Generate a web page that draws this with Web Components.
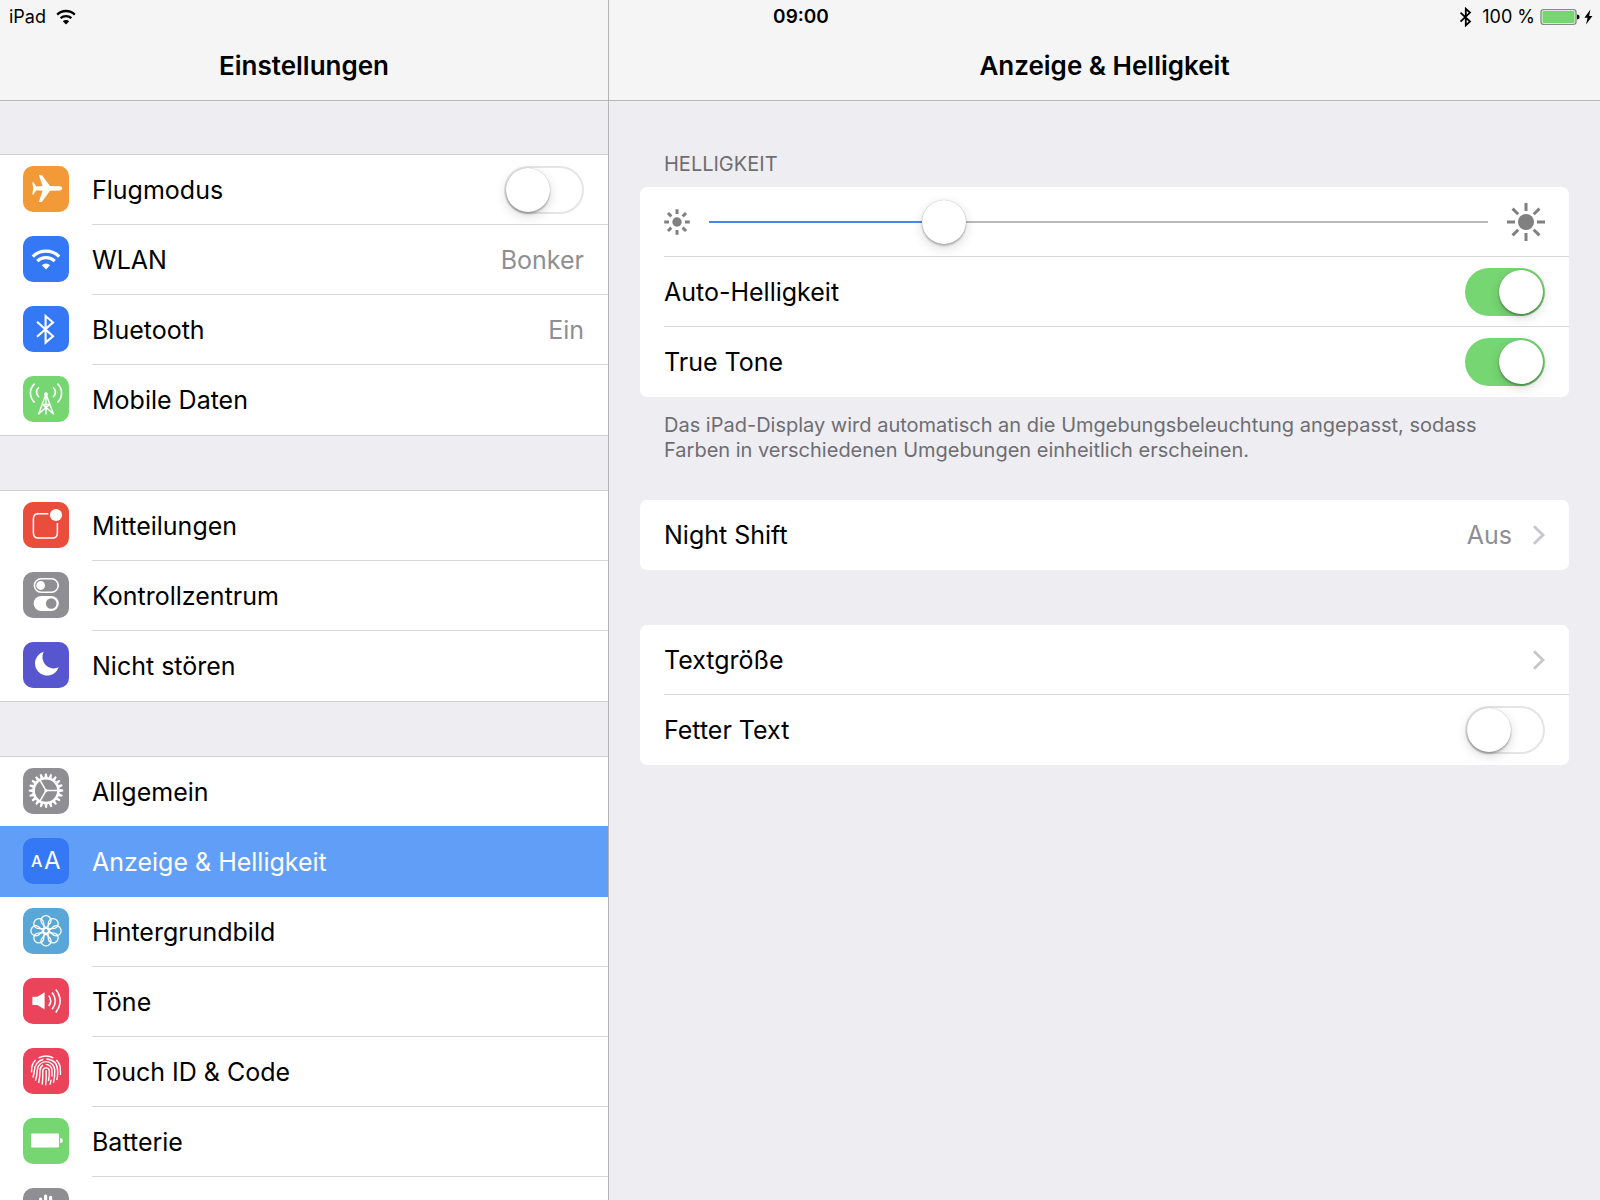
<!DOCTYPE html>
<html lang="de">
<head>
<meta charset="utf-8">
<meta name="viewport" content="width=device-width, initial-scale=1">
<title>Einstellungen</title>
<style>
  :root {
    --bg: #eeedf2;
    --bar: #f5f5f6;
    --line: #d8d8dc;
    --blue: #3478f6;
    --green: #76d672;
    --gray: #8e8e93;
    --row: 70px;
    --inset: 24px;
    --gap: 54px;
  }

  body {
    margin: 0;
    background: var(--bg);
    color: #000;
    font: 25px/34px Inter, "Liberation Sans", sans-serif;
  }
</style>
</head>
<body>
<split-view>
  <status-bar slot="status"></status-bar>

  <nav-pane slot="master" heading="Einstellungen">
    <settings-list>
      <switch-row icon="plane">Flugmodus</switch-row>
      <link-row icon="wifi" value="Bonker">WLAN</link-row>
      <link-row icon="bluetooth" value="Ein">Bluetooth</link-row>
      <link-row icon="cellular">Mobile Daten</link-row>
    </settings-list>
    <settings-list>
      <link-row icon="notifications">Mitteilungen</link-row>
      <link-row icon="control">Kontrollzentrum</link-row>
      <link-row icon="moon">Nicht stören</link-row>
    </settings-list>
    <settings-list>
      <link-row icon="gear">Allgemein</link-row>
      <link-row icon="display" selected>Anzeige &amp; Helligkeit</link-row>
      <link-row icon="wallpaper">Hintergrundbild</link-row>
      <link-row icon="sound">Töne</link-row>
      <link-row icon="touchid">Touch ID &amp; Code</link-row>
      <link-row icon="battery">Batterie</link-row>
      <link-row icon="privacy" name="Datenschutz"></link-row>
    </settings-list>
  </nav-pane>

  <nav-pane slot="detail" heading="Anzeige &amp; Helligkeit">
    <settings-card heading="Helligkeit">
      <brightness-row value="29"></brightness-row>
      <switch-row checked>Auto-Helligkeit</switch-row>
      <switch-row checked>True Tone</switch-row>
      <span slot="note">Das iPad-Display wird automatisch an die Umgebungsbeleuchtung angepasst, sodass Farben in verschiedenen Umgebungen einheitlich erscheinen.</span>
    </settings-card>
    <settings-card>
      <link-row value="Aus" chevron>Night Shift</link-row>
    </settings-card>
    <settings-card>
      <link-row chevron>Textgröße</link-row>
      <switch-row>Fetter Text</switch-row>
    </settings-card>
  </nav-pane>
</split-view>

<script>
// Tile icons, all drawn in a 46 x 46 box
const around = (n, shape) => Array.from({ length: n }, (_, i) =>
  `<g transform="rotate(${i * 360 / n})">${shape}</g>`).join('');

const ICONS = {
  plane: ['#f19a37', `
    <path fill="#fff" d="M37 20.3Q39.2 20.8 39.2 22.4T37 24.5L27 24.8 18.8 36H15.8L19.6 24.8 13.4 24.2 10.4 28.4H9.3L10.2 22.4 9.3 16.2H10.4L13.4 20.4 19.6 20 15.8 9H18.8L27 20Z"/>`],
  wifi: ['#3478f6', `
    <path stroke-width="3.2" d="M9.8 20.6A18.6 18.6 0 0 1 36.2 20.6M14.3 25.2A12.2 12.2 0 0 1 31.7 25.2"/>
    <path fill="#fff" d="M23 33.4L18.9 29.2A6 6 0 0 1 27.1 29.2Z"/>`],
  bluetooth: ['#3478f6', `
    <path stroke-width="2.1" d="M14 15.7L30 30.2 22.6 36.6V10L30 16.4 14 30.8"/>`],
  cellular: ['#76d672', `
    <path stroke-width="1.6" d="M11.6 7.6C6 13 6 21 11.6 26.6M34.4 7.6C40 13 40 21 34.4 26.6M16 11.2C12.8 14.4 12.8 18 16 21.2M30 11.2C33.2 14.4 33.2 18 30 21.2"/>
    <path stroke-width="1.4" d="M23 18V38.6M22.6 19L15.4 38.4M23.4 19L30.6 38.4M19.4 28.4H26.6M19.4 28.4L30.6 38M26.6 28.4L15.4 38"/>
    <circle cx="23" cy="18.2" r="1.9" fill="#fff"/>`],
  notifications: ['#eb4d3d', `
    <path stroke-width="1.5" d="M25.4 11.8H15.4Q10.4 11.8 10.4 16.8V31Q10.4 36 15.4 36H29.4Q34.4 36 34.4 31V21"/>
    <circle cx="33" cy="13" r="6.1" fill="#fff"/>`],
  control: ['#8e8e93', `
    <rect x="11.4" y="6.8" width="23.8" height="13.4" rx="6.7" stroke-width="1.6"/>
    <circle cx="17.7" cy="13.5" r="4.4" fill="#fff"/>
    <rect x="10.6" y="24" width="25.2" height="15" rx="7.5" fill="#fff"/>
    <circle cx="28.2" cy="31.5" r="5.3" fill="#8e8e93"/>`],
  moon: ['#5856ce', `
    <path fill="#fff" d="M20.7 9.7A12.2 12.2 0 1 0 35.7 25.3A11.4 11.4 0 0 1 20.7 9.7Z"/>`],
  gear: ['#8e8e93', `
    <g transform="translate(23 22.6)">
      <circle r="12.4" stroke-width="2.6"/>
      ${around(20, '<path d="M-1.6-13L-1-17.2H.8L1.6-13Z" fill="#fff"/>')}
      ${around(3, '<path d="M0 0H12.4" stroke-width="1.5"/>')}
      <circle r="1.6" fill="#fff"/>
    </g>`],
  display: ['#3478f6', `
    <text x="8" y="29.4" font-size="16" font-weight="500" fill="#fff">A</text>
    <text x="21" y="31.4" font-size="24" fill="#fff">A</text>`],
  wallpaper: ['#59a7d7', `
    <g transform="translate(23 22.8)" stroke-width="1.3">
      ${around(8, '<path d="M0-2.6C-1.4-5-5.1-7-5.1-10A5.1 5.1 0 0 1 5.1-10C5.1-7 1.4-5 0-2.6Z"/>')}
      <circle r="2.7"/>
    </g>`],
  sound: ['#eb445a', `
    <path fill="#fff" d="M9.4 18.8H14.4L21.6 14.2V31.4L14.4 27H9.4Z"/>
    <path stroke-width="1.6" d="M25.8 17.6Q29.6 22.8 25.8 28M29.2 14.4Q35.4 22.8 29.2 31.2M32.8 11.6Q41.4 22.8 32.8 34.4"/>`],
  touchid: ['#eb445a', `
    <g stroke-width="1.4">
      <path d="M15.6 9.8Q23 6.2 30.4 9.8M12.6 12Q8.4 16.4 8.6 22.4V24.6M33.4 12Q37.6 16.4 37.4 22.4V27"/>
      <path d="M9.8 29.6Q11.4 25 11.4 22.6A11.6 11.6 0 0 1 20.4 11.3M23.4 11Q34.6 12 34.6 22.6V26Q34.6 29 33.8 32"/>
      <path d="M12.4 32.8Q14.2 27 14.2 22.4A8.8 8.8 0 0 1 31.8 22.4Q31.9 29 30.4 34.8"/>
      <path d="M15.6 35Q17 29 17 22.4A6 6 0 0 1 20 17.2M22.8 16.4A6.2 6.2 0 0 1 29 22.6Q29.2 26 28.8 28.6M28.2 31.6L27 36.6"/>
      <path d="M19.2 36.6Q20 30 19.8 22.6A3.3 3.3 0 0 1 26.3 22.6Q26.6 29 25.4 33M23.1 22Q23.6 30 22.6 37.4"/>
    </g>`],
  battery: ['#76d672', `
    <rect x="8" y="15.6" width="28" height="13.8" rx="1" fill="#fff"/>
    <path fill="#fff" d="M37.2 20A2.5 2.5 0 0 1 37.2 25Z"/>`],
  privacy: ['#8e8e93', `
    <path stroke-width="3.2" stroke-linecap="round" d="M17.6 11V24M22.6 8V24M27.6 9.4V24"/>
    <path stroke-width="2.8" stroke-linecap="round" d="M32 14V26"/>
    <path fill="#fff" d="M16 22H33.4V28Q32 38 24 38 19 38 16 33L10 25Q13 22 16 26Z"/>`]
};

const BLUETOOTH = '<path d="M1.5 5.6L11 14.6 6.8 18.4V1.8L11 5.6 1.5 14.6" fill="none" stroke="#000" stroke-width="1.8"/>';

class TileIcon extends HTMLElement {
  constructor() {
    super();
    this.attachShadow({ mode: 'open' });
  }

  connectedCallback() {
    const [color, shapes] = ICONS[this.getAttribute('name')];
    this.shadowRoot.innerHTML = `
      <style>
        :host {
          display: block;
          width: 46px;
          height: 46px;
          border-radius: 10px;
          background: ${color};
          overflow: hidden;
        }

        svg {
          display: block;
          fill: none;
          stroke: #fff;
        }

        [fill] {
          stroke: none;
        }
      </style>
      <svg width="46" height="46" viewBox="0 0 46 46" aria-hidden="true">${shapes}</svg>
    `;
  }
}

class StatusBar extends HTMLElement {
  constructor() {
    super();
    this.attachShadow({ mode: 'open' });
    this.shadowRoot.innerHTML = `
      <style>
        :host {
          display: grid;
          grid-template-columns: 1fr auto 1fr;
          align-items: center;
          height: 33px;
          padding: 0 7px 0 9px;
          font-size: 18px;
          line-height: 24px;
        }

        div {
          display: flex;
          align-items: center;
          gap: 10px;
        }

        .right {
          justify-content: flex-end;
        }

        .power {
          gap: 5px;
        }

        time {
          font-size: 19px;
          font-weight: 600;
        }

        svg {
          display: block;
        }
      </style>
      <div>
        <span>iPad</span>
        <svg width="20" height="16" viewBox="0 0 20 16">
          <path d="M1.2 5.6A12.6 12.6 0 0 1 18.8 5.6M4.6 9.2A7.8 7.8 0 0 1 15.4 9.2" fill="none" stroke="#000" stroke-width="2.3"/>
          <path d="M10 15.6L6.8 12.2A4.6 4.6 0 0 1 13.2 12.2Z"/>
        </svg>
      </div>
      <time>09:00</time>
      <div class="right">
        <svg width="13" height="20" viewBox="0 0 13 20">${BLUETOOTH}</svg>
        <div class="power">
          <span>100 %</span>
          <svg width="53" height="18" viewBox="0 0 53 18">
            <rect x="1" y="1.6" width="35" height="14.8" rx="2.6" fill="#fff" stroke="#8a8a8a" stroke-width="1.4"/>
            <rect x="2.4" y="3" width="32.2" height="12" rx="1.2" fill="#76d672"/>
            <path d="M37 6.4Q39.6 6.8 39.6 9T37 11.6Z"/>
            <path d="M50.4 1.6L44.4 9.8H47.6L46 16.6 52.4 8H49.2Z"/>
          </svg>
        </div>
      </div>
    `;
  }
}

class SplitView extends HTMLElement {
  constructor() {
    super();
    this.attachShadow({ mode: 'open' });
    this.shadowRoot.innerHTML = `
      <style>
        :host {
          display: grid;
          grid-template-columns: 38% 1fr;
          grid-template-rows: 33px minmax(0, 1fr);
          height: 100vh;
          overflow: hidden;
        }

        /* the status bar shares its row with the tops of both panes */
        ::slotted([slot="status"]) {
          grid-area: 1 / 1 / 2 / 3;
          z-index: 1;
        }

        ::slotted([slot="master"]) {
          grid-area: 1 / 1 / 3 / 2;
        }

        ::slotted([slot="detail"]) {
          grid-area: 1 / 2 / 3 / 3;
          border-left: 1px solid #b4b4b8;
          --gap: 55px;
          --pane-top: 51px;
          --pane-inset: 31px;
        }
      </style>
      <slot name="status"></slot>
      <slot name="master"></slot>
      <slot name="detail"></slot>
    `;
  }
}

class NavPane extends HTMLElement {
  constructor() {
    super();
    this.attachShadow({ mode: 'open' });
    this.shadowRoot.innerHTML = `
      <style>
        :host {
          display: flex;
          flex-direction: column;
          min-width: 0;
          min-height: 0;
        }

        header {
          flex: none;
          padding: 32px 16px 0;
          background: var(--bar);
          border-bottom: 1px solid #b7b7ba;
        }

        h1 {
          margin: 0;
          font-size: 26px;
          line-height: 68px;
          font-weight: 600;
          text-align: center;
        }

        main {
          flex: 1;
          display: flex;
          flex-direction: column;
          gap: var(--gap);
          padding: var(--pane-top, 53px) var(--pane-inset, 0px) 53px;
          overflow-y: auto;
          scrollbar-width: none;
        }
      </style>
      <header><h1></h1></header>
      <main><slot></slot></main>
    `;
  }

  connectedCallback() {
    this.shadowRoot.querySelector('h1').textContent = this.getAttribute('heading');
  }
}

class SettingsList extends HTMLElement {
  constructor() {
    super();
    this.attachShadow({ mode: 'open' });
    this.shadowRoot.innerHTML = `
      <style>
        :host {
          display: block;
          flex: none;
          background: #fff;
          border: solid #d0d0d5;
          border-width: 1px 0;
        }

        ::slotted(:last-child) {
          --line: transparent;
        }
      </style>
      <slot></slot>
    `;
  }
}

class SettingsCard extends HTMLElement {
  constructor() {
    super();
    this.attachShadow({ mode: 'open' });
    this.shadowRoot.innerHTML = `
      <style>
        :host {
          display: block;
          flex: none;
        }

        h2, p {
          margin: 0;
          padding: 0 var(--inset);
          color: #6d6d72;
          font-size: 20px;
          line-height: 25px;
          font-weight: 400;
        }

        h2 {
          padding-bottom: 10px;
          text-transform: uppercase;
        }

        p {
          padding-top: 16px;
          margin-bottom: -18px;
        }

        section {
          background: #fff;
          border-radius: 7px;
          overflow: hidden;
        }

        h2[hidden], p[hidden] {
          display: none;
        }
      </style>
      <h2></h2>
      <section><slot></slot></section>
      <p><slot name="note"></slot></p>
    `;
  }

  connectedCallback() {
    const heading = this.shadowRoot.querySelector('h2');
    heading.textContent = this.getAttribute('heading');
    heading.hidden = !this.hasAttribute('heading');
    this.shadowRoot.querySelector('p').hidden = !this.querySelector('[slot="note"]');
    const rows = this.querySelectorAll(':scope > :not([slot])');
    rows[rows.length - 1].style.setProperty('--line', 'transparent');
  }
}

const ROW_STYLE = `
  :host {
    display: block;
  }

  .row {
    display: flex;
    height: var(--row);
    padding-left: var(--inset);
    color: inherit;
    text-decoration: none;
  }

  tile-icon {
    flex: none;
    margin: 11px 23px 0 -1px;
  }

  .body {
    flex: 1;
    display: flex;
    align-items: center;
    gap: 20px;
    min-width: 0;
    padding-right: var(--inset);
    border-bottom: 1px solid var(--line);
  }

  .text {
    flex: 1;
  }
`;

class LinkRow extends HTMLElement {
  constructor() {
    super();
    this.attachShadow({ mode: 'open' });
  }

  connectedCallback() {
    const icon = this.getAttribute('icon');
    const value = this.getAttribute('value');
    const name = this.getAttribute('name');
    this.shadowRoot.innerHTML = `
      <style>
        ${ROW_STYLE}
        .value {
          color: var(--gray);
        }

        /* the highlight also covers the line of the row above */
        :host([selected]) {
          position: relative;
          background: #619ef7;
          box-shadow: 0 -1px #619ef7;
          color: #fff;
          --line: transparent;
        }
      </style>
      <a class="row" href="#" ${name ? `aria-label="${name}"` : ''} ${this.hasAttribute('selected') ? 'aria-current="page"' : ''}>
        ${icon ? `<tile-icon name="${icon}"></tile-icon>` : ''}
        <span class="body">
          <span class="text"><slot></slot></span>
          ${value ? `<span class="value">${value}</span>` : ''}
          ${this.hasAttribute('chevron') ? `
            <svg width="13" height="20" viewBox="0 0 13 20" aria-hidden="true">
              <path d="M2 1.2L11 10 2 18.8" fill="none" stroke="#c7c7cc" stroke-width="2.8"/>
            </svg>` : ''}
        </span>
      </a>
    `;
  }
}

class SwitchRow extends HTMLElement {
  constructor() {
    super();
    this.attachShadow({ mode: 'open' });
  }

  connectedCallback() {
    const icon = this.getAttribute('icon');
    this.shadowRoot.innerHTML = `
      <style>
        ${ROW_STYLE}
        input {
          appearance: none;
          flex: none;
          display: flex;
          box-sizing: border-box;
          width: 80px;
          height: 48px;
          margin: 0;
          padding: 2px;
          border-radius: 24px;
          background: #fff;
          box-shadow: inset 0 0 0 2px #e5e5e5;
        }

        input::before {
          content: "";
          width: 44px;
          height: 44px;
          border-radius: 50%;
          background: #fff;
          box-shadow: 0 2px 2px rgba(0,0,0,0.25), 0 4px 12px rgba(0,0,0,0.15), 0 0 1px rgba(0,0,0,0.3);
        }

        input:checked {
          justify-content: flex-end;
          background: var(--green);
          box-shadow: none;
        }
      </style>
      <label class="row">
        ${icon ? `<tile-icon name="${icon}"></tile-icon>` : ''}
        <span class="body">
          <span class="text"><slot></slot></span>
          <input type="checkbox" role="switch" ${this.hasAttribute('checked') ? 'checked' : ''}>
        </span>
      </label>
    `;
  }
}

class BrightnessRow extends HTMLElement {
  constructor() {
    super();
    this.attachShadow({ mode: 'open' });
    const sun = (size, r, from, to, width) => `
      <svg width="${size}" height="${size}" viewBox="${-size / 2} ${-size / 2} ${size} ${size}" aria-hidden="true">
        <circle r="${r}" fill="#808080"/>
        ${around(8, `<path d="M${from} 0H${to}" stroke="#808080" stroke-width="${width}"/>`)}
      </svg>`;
    this.shadowRoot.innerHTML = `
      <style>
        ${ROW_STYLE}
        svg {
          flex: none;
        }

        .body {
          gap: 19px;
        }

        input {
          --pos: calc(22px + (100% - 44px) * var(--value) / 100);
          appearance: none;
          flex: 1;
          min-width: 0;
          height: 44px;
          margin: 0;
          background: linear-gradient(90deg, #4a88f0 var(--pos), #b9b9b9 var(--pos)) center / 100% 2px no-repeat;
        }

        input::-webkit-slider-thumb {
          appearance: none;
          width: 44px;
          height: 44px;
          border-radius: 50%;
          background: #fff;
          box-shadow: 0 2px 2px rgba(0,0,0,0.2), 0 4px 12px rgba(0,0,0,0.15), 0 0 1px rgba(0,0,0,0.4);
        }
      </style>
      <div class="row">
        <div class="body">
          ${sun(26, 4.7, 8, 12.8, 3)}
          <input type="range" min="0" max="100" aria-label="Helligkeit">
          ${sun(38, 8, 11, 19, 3)}
        </div>
      </div>
    `;
  }

  connectedCallback() {
    const input = this.shadowRoot.querySelector('input');
    const update = () => input.style.setProperty('--value', input.value);
    input.value = this.getAttribute('value');
    input.addEventListener('input', update);
    update();
  }
}

customElements.define('tile-icon', TileIcon);
customElements.define('status-bar', StatusBar);
customElements.define('split-view', SplitView);
customElements.define('nav-pane', NavPane);
customElements.define('settings-list', SettingsList);
customElements.define('settings-card', SettingsCard);
customElements.define('link-row', LinkRow);
customElements.define('switch-row', SwitchRow);
customElements.define('brightness-row', BrightnessRow);
</script>
</body>
</html>
